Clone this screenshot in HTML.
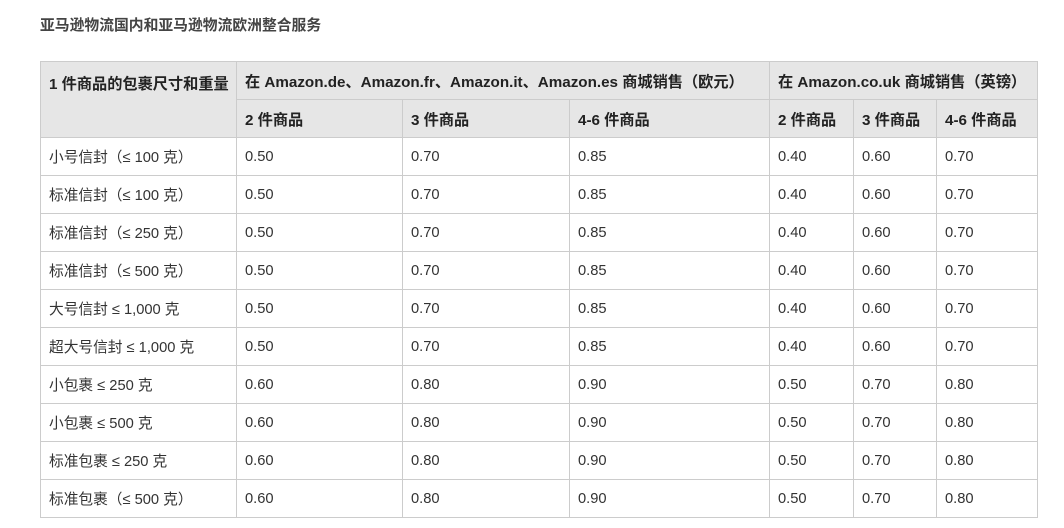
<!DOCTYPE html>
<html><head><meta charset="utf-8"><style>
body{margin:0;background:#fff;font-family:"Liberation Sans","Noto Sans CJK SC",sans-serif;color:#333;font-size:14.7px;}
h1{position:absolute;left:40px;top:16px;margin:0;font-size:14.8px;font-weight:bold;color:#444;line-height:20px;}
table{position:absolute;left:40px;top:61px;border-collapse:collapse;table-layout:fixed;}
td,th{border:1px solid #ccc;padding:0 0 0 8px;text-align:left;vertical-align:middle;height:37px;white-space:nowrap;overflow:hidden;}
th{background:#e6e6e6;font-weight:bold;color:#222;font-size:15.2px;}
th.tl{vertical-align:top;padding-top:10px;}
</style></head><body>
<h1>亚马逊物流国内和亚马逊物流欧洲整合服务</h1>
<table>
<colgroup><col style="width:196px"><col style="width:166px"><col style="width:167px"><col style="width:200px"><col style="width:84px"><col style="width:83px"><col style="width:101px"></colgroup>
<tr><th rowspan="2" class="tl">1 件商品的包裹尺寸和重量</th><th colspan="3">在 Amazon.de、Amazon.fr、Amazon.it、Amazon.es 商城销售（欧元）</th><th colspan="3">在 Amazon.co.uk 商城销售（英镑）</th></tr>
<tr><th>2 件商品</th><th>3 件商品</th><th>4-6 件商品</th><th>2 件商品</th><th>3 件商品</th><th>4-6 件商品</th></tr>
<tr><td>小号信封（≤ 100 克）</td><td>0.50</td><td>0.70</td><td>0.85</td><td>0.40</td><td>0.60</td><td>0.70</td></tr>
<tr><td>标准信封（≤ 100 克）</td><td>0.50</td><td>0.70</td><td>0.85</td><td>0.40</td><td>0.60</td><td>0.70</td></tr>
<tr><td>标准信封（≤ 250 克）</td><td>0.50</td><td>0.70</td><td>0.85</td><td>0.40</td><td>0.60</td><td>0.70</td></tr>
<tr><td>标准信封（≤ 500 克）</td><td>0.50</td><td>0.70</td><td>0.85</td><td>0.40</td><td>0.60</td><td>0.70</td></tr>
<tr><td>大号信封 ≤ 1,000 克</td><td>0.50</td><td>0.70</td><td>0.85</td><td>0.40</td><td>0.60</td><td>0.70</td></tr>
<tr><td>超大号信封 ≤ 1,000 克</td><td>0.50</td><td>0.70</td><td>0.85</td><td>0.40</td><td>0.60</td><td>0.70</td></tr>
<tr><td>小包裹 ≤ 250 克</td><td>0.60</td><td>0.80</td><td>0.90</td><td>0.50</td><td>0.70</td><td>0.80</td></tr>
<tr><td>小包裹 ≤ 500 克</td><td>0.60</td><td>0.80</td><td>0.90</td><td>0.50</td><td>0.70</td><td>0.80</td></tr>
<tr><td>标准包裹 ≤ 250 克</td><td>0.60</td><td>0.80</td><td>0.90</td><td>0.50</td><td>0.70</td><td>0.80</td></tr>
<tr><td>标准包裹（≤ 500 克）</td><td>0.60</td><td>0.80</td><td>0.90</td><td>0.50</td><td>0.70</td><td>0.80</td></tr>
</table>
</body></html>
